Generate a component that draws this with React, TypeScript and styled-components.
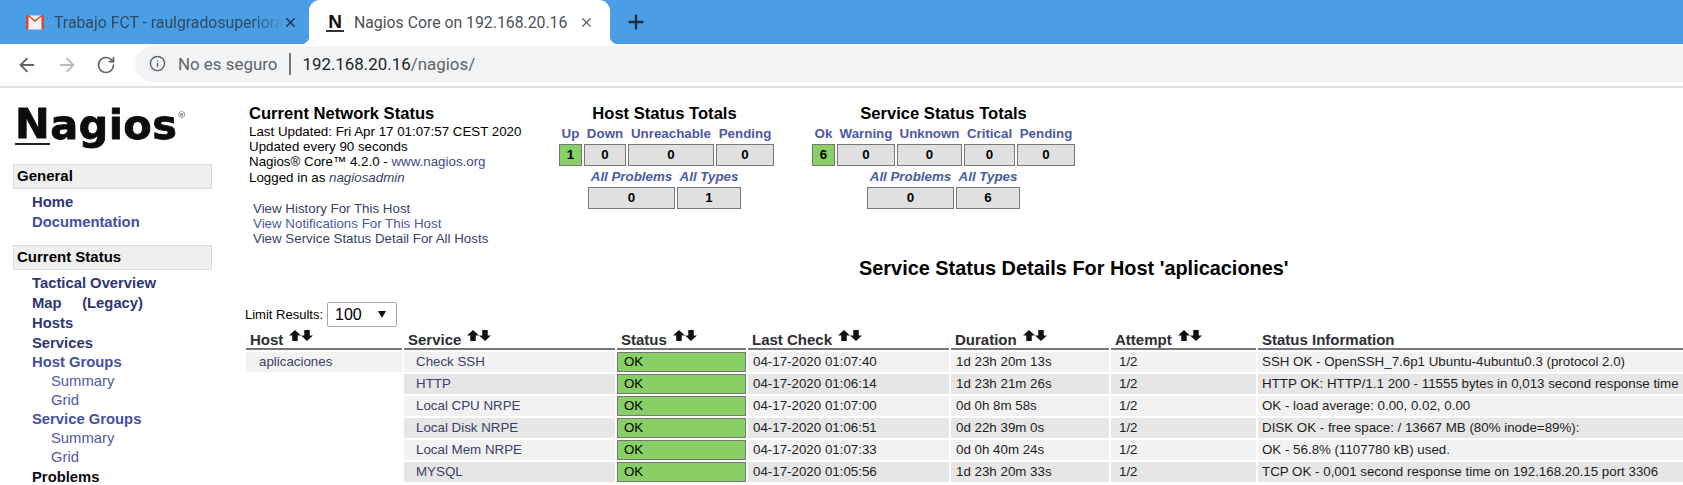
import styled, { createGlobalStyle } from "styled-components";
import { ArrowLeft, ArrowRight, Info, Plus, RotateCw, X } from "lucide-react";

const GlobalStyle = createGlobalStyle`
  html, body {
    margin: 0;
    padding: 0;
    height: 485px;
    overflow: hidden;
    background: #fff;
  }
  body {
    font-family: "Liberation Sans", Arial, sans-serif;
    color: #000;
  }
`;

const TabBar = styled.div`
  height: 44px;
  background: #4a9ee6;
  display: flex;
  align-items: flex-end;
  padding-left: 9px;
`;

const InactiveTab = styled.div`
  width: 300px;
  height: 44px;
  box-sizing: border-box;
  display: flex;
  align-items: center;
  padding: 0 11px 0 17px;
  color: #2f4a63;
  font: 15.8px Roboto, sans-serif;
  svg.close {
    color: #24384d;
    flex: none;
  }
`;

const TabTitle = styled.span<{ $fade?: boolean }>`
  flex: 1;
  margin-left: 10px;
  white-space: nowrap;
  overflow: hidden;
  ${(p) =>
    p.$fade
      ? "mask-image: linear-gradient(to right, #000 88%, transparent 100%);"
      : ""}
`;

const ActiveTab = styled.div`
  position: relative;
  width: 301px;
  height: 44px;
  box-sizing: border-box;
  background: #fff;
  border-radius: 11px 11px 0 0;
  display: flex;
  align-items: center;
  padding: 0 16px 0 17px;
  color: #4d5156;
  font: 15.8px Roboto, sans-serif;
  &::before,
  &::after {
    content: "";
    position: absolute;
    bottom: 0;
    width: 8px;
    height: 8px;
  }
  &::before {
    left: -8px;
    background: radial-gradient(circle at 0 0, transparent 8px, #fff 8.5px);
  }
  &::after {
    right: -8px;
    background: radial-gradient(circle at 100% 0, transparent 8px, #fff 8.5px);
  }
  svg.close {
    color: #5f6368;
    flex: none;
  }
`;

const NagiosFavicon = styled.span`
  width: 18px;
  flex: none;
  font: bold 19px/16px "Liberation Sans", sans-serif;
  color: #111;
  text-align: center;
  border-bottom: 2px solid #333;
  margin-top: 1px;
`;

const NewTab = styled.div`
  height: 44px;
  display: flex;
  align-items: center;
  margin-left: 15px;
  color: #1f2d3d;
`;

const AddressRow = styled.div`
  height: 44px;
  display: flex;
  align-items: center;
  box-sizing: border-box;
  padding-left: 16px;
  border-bottom: 2px solid #dfe1e5;
  gap: 16px;
  color: #5f6368;
`;

const NavIcon = styled.span<{ $dim?: boolean }>`
  width: 24px;
  display: flex;
  color: ${(p) => (p.$dim ? "#b5b8bc" : "#5f6368")};
`;

const UrlPill = styled.div`
  flex: 1;
  height: 36px;
  margin-left: -1px;
  margin-top: -3px;
  background: #f1f3f4;
  border-radius: 18px 0 0 18px;
  display: flex;
  align-items: center;
  padding-left: 14px;
  font: 16.9px Roboto, sans-serif;
  white-space: nowrap;
`;

const SecurityLabel = styled.span`
  margin-left: 12px;
  color: #5f6368;
`;

const UrlDivider = styled.span`
  width: 2px;
  height: 22px;
  background: #777;
  margin: 0 11px 0 12px;
`;

const UrlHost = styled.span`
  color: #1f2328;
`;

const UrlPath = styled.span`
  color: #5f6368;
`;

const Page = styled.div`
  display: flex;
  align-items: flex-start;
`;

const Sidebar = styled.nav`
  width: 199px;
  flex: none;
  margin-left: 13px;
  padding-top: 14px;
`;

const Logo = styled.div`
  display: flex;
  align-items: flex-start;
  height: 62px;
  margin-left: 2px;
  font: bold 41.5px/46px "DejaVu Sans", sans-serif;
  letter-spacing: 0.4px;
  color: #0c0c0c;
  -webkit-text-stroke: 0.8px #0c0c0c;
  filter: blur(0.35px);
`;

const LogoInitial = styled.span`
  height: 41px;
  line-height: 44px;
  border-bottom: 2px solid #222;
`;

const LogoMark = styled.sup`
  font-size: 9px;
  line-height: 26px;
  letter-spacing: 0;
  color: #777;
  -webkit-text-stroke: 0;
`;

const SectionHeader = styled.div`
  height: 25px;
  box-sizing: border-box;
  background: #efefef;
  border: 1px solid #dcdcdc;
  padding-left: 3px;
  font-size: 15px;
  font-weight: bold;
  line-height: 22px;
`;

const NavList = styled.div<{ $bottom?: number; $top?: number }>`
  display: flex;
  flex-direction: column;
  padding: ${(p) => p.$top ?? 3}px 0 ${(p) => p.$bottom ?? 0}px 19px;
`;

const NavItem = styled.a<{ $tone?: string; $sub?: boolean; $h?: number }>`
  height: ${(p) => p.$h ?? 20}px;
  line-height: ${(p) => p.$h ?? 20}px;
  font-size: 14.8px;
  font-weight: ${(p) => (p.$sub ? "normal" : "bold")};
  padding-left: ${(p) => (p.$sub ? 19 : 0)}px;
  color: ${(p) => p.$tone ?? "#2f3573"};
  white-space: pre;
`;

const Main = styled.main`
  flex: 1;
  min-width: 0;
  margin-left: 33px;
  padding-top: 15px;
`;

const TopRow = styled.div`
  display: flex;
  align-items: flex-start;
  height: 153px;
`;

const InfoBlock = styled.div`
  width: 308px;
  margin-left: 4px;
  font-size: 13.33px;
  line-height: 15.2px;
`;

const InfoTitle = styled.div`
  font-size: 16.6px;
  font-weight: bold;
  line-height: 21px;
`;

const QuickLinks = styled.div`
  margin: 16px 0 0 4px;
`;

const LinkText = styled.a<{ $tone?: string }>`
  display: block;
  color: ${(p) => p.$tone ?? "#3a4066"};
`;

const InlineLink = styled.span`
  color: #3f4a86;
`;

const AdminName = styled.i`
  color: #3a4066;
`;

const Totals = styled.div<{ $w: number; $gap: number }>`
  width: ${(p) => p.$w}px;
  margin-right: ${(p) => p.$gap}px;
  display: flex;
  flex-direction: column;
  align-items: center;
`;

const TotalsTitle = styled.div`
  font-size: 16.6px;
  font-weight: bold;
  line-height: 21px;
`;

const TotalsGrid = styled.div<{ $cols: string; $shift?: number }>`
  display: grid;
  grid-template-columns: ${(p) => p.$cols};
  column-gap: 2px;
  justify-content: center;
  margin-left: ${(p) => p.$shift ?? 0}px;
`;

const TotalsHead = styled.div<{ $italic?: boolean }>`
  height: 20px;
  line-height: 20px;
  font-size: 13.33px;
  font-weight: bold;
  font-style: ${(p) => (p.$italic ? "italic" : "normal")};
  color: #4c58a4;
  text-align: center;
  white-space: nowrap;
`;

const TotalsCell = styled.div<{ $ok?: boolean }>`
  height: 22px;
  box-sizing: border-box;
  background: ${(p) => (p.$ok ? "#88d066" : "#e0e0e0")};
  border: 1px solid #777;
  font-size: 13.33px;
  font-weight: bold;
  line-height: 20px;
  text-align: center;
`;

const GridSpacer = styled.div`
  height: 1px;
`;

const PageTitle = styled.h1`
  margin: 0 0 0 614px;
  font-size: 19.9px;
  font-weight: bold;
  line-height: 24px;
  white-space: nowrap;
`;

const LimitRow = styled.div`
  display: flex;
  align-items: center;
  margin: 22px 0 0;
  font-size: 13px;
  height: 25px;
`;

const LimitBox = styled.div`
  width: 70px;
  height: 25px;
  box-sizing: border-box;
  margin-left: 4px;
  border: 1px solid #a6a6a6;
  border-radius: 2px;
  display: flex;
  align-items: center;
  justify-content: space-between;
  padding: 0 10px 0 7px;
  font-size: 16px;
`;

const Caret = styled.span`
  width: 0;
  height: 0;
  border-left: 4px solid transparent;
  border-right: 4px solid transparent;
  border-top: 7px solid #111;
`;

const StatusTable = styled.div`
  display: grid;
  grid-template-columns: 156px 211px 129px 201px 158px 145px 1fr;
  column-gap: 2px;
  width: 1438px;
  margin-left: 1px;
`;

const HeadCell = styled.div`
  height: 23px;
  box-sizing: border-box;
  border-bottom: 2px solid #777;
  padding: 0 0 1px 4px;
  display: flex;
  align-items: flex-end;
  font-size: 15px;
  font-weight: bold;
  line-height: 14px;
  color: #2d2d33;
  white-space: nowrap;
`;

const SortIcons = styled.span`
  display: inline-flex;
  margin: 0 0 6px 6px;
  gap: 0;
`;

const BodyCell = styled.div<{ $zebra: boolean; $pad?: number; $tone?: string }>`
  height: 20px;
  margin-top: 2px;
  box-sizing: border-box;
  background: ${(p) => (p.$zebra ? "#e6e6e6" : "#f3f2f3")};
  padding-left: ${(p) => p.$pad ?? 5}px;
  font-size: 13.33px;
  line-height: 20px;
  color: ${(p) => p.$tone ?? "#1d1d22"};
  white-space: nowrap;
  overflow: hidden;
`;

const EmptyCell = styled.div`
  height: 20px;
  margin-top: 2px;
`;

const StatusCell = styled.div`
  height: 20px;
  margin-top: 2px;
  box-sizing: border-box;
  background: #88d066;
  border: 1px solid #777;
  padding-left: 6px;
  font-size: 13.33px;
  line-height: 18px;
`;

function SortArrow({ down }: { down?: boolean }) {
  return (
    <svg width="12" height="11" viewBox="0 0 11 10" fill="#111">
      <path
        d="M5.5 0 L11 5 H8 V10 H3 V5 H0 Z"
        transform={down ? "rotate(180 5.5 5)" : undefined}
      />
    </svg>
  );
}

function Sort() {
  return (
    <SortIcons>
      <SortArrow />
      <SortArrow down />
    </SortIcons>
  );
}

function GmailIcon() {
  return (
    <svg width="18" height="15" viewBox="0 0 18 15">
      <rect x="0.5" y="0.5" width="17" height="14" rx="1" fill="#f2f2f2" />
      <path d="M2.5 1.5 L9 7 L15.5 1.5 V14.5 H18 V1 Q18 0 17 0 H15.5 L9 5 L2.5 0 H1 Q0 0 0 1 V14.5 H2.5 Z" fill="#db4437" />
    </svg>
  );
}

const services = [
  ["Check SSH", "04-17-2020 01:07:40", "1d 23h 20m 13s", "SSH OK - OpenSSH_7.6p1 Ubuntu-4ubuntu0.3 (protocol 2.0)"],
  ["HTTP", "04-17-2020 01:06:14", "1d 23h 21m 26s", "HTTP OK: HTTP/1.1 200 - 11555 bytes in 0,013 second response time"],
  ["Local CPU NRPE", "04-17-2020 01:07:00", "0d 0h 8m 58s", "OK - load average: 0.00, 0.02, 0.00"],
  ["Local Disk NRPE", "04-17-2020 01:06:51", "0d 22h 39m 0s", "DISK OK - free space: / 13667 MB (80% inode=89%):"],
  ["Local Mem NRPE", "04-17-2020 01:07:33", "0d 0h 40m 24s", "OK - 56.8% (1107780 kB) used."],
  ["MYSQL", "04-17-2020 01:05:56", "1d 23h 20m 33s", "TCP OK - 0,001 second response time on 192.168.20.15 port 3306"],
];

const headers = [
  { label: "Host", sort: true },
  { label: "Service", sort: true },
  { label: "Status", sort: true },
  { label: "Last Check", sort: true },
  { label: "Duration", sort: true },
  { label: "Attempt", sort: true },
  { label: "Status Information", sort: false },
];

export default function App() {
  return (
    <>
      <GlobalStyle />
      <TabBar>
        <InactiveTab>
          <GmailIcon />
          <TabTitle $fade>Trabajo FCT - raulgradosuperiora</TabTitle>
          <X className="close" size={15} strokeWidth={2.6} />
        </InactiveTab>
        <ActiveTab>
          <NagiosFavicon>N</NagiosFavicon>
          <TabTitle>Nagios Core on 192.168.20.16</TabTitle>
          <X className="close" size={15} strokeWidth={2} />
        </ActiveTab>
        <NewTab>
          <Plus size={22} strokeWidth={2.6} />
        </NewTab>
      </TabBar>
      <AddressRow>
        <NavIcon>
          <ArrowLeft size={22} />
        </NavIcon>
        <NavIcon $dim>
          <ArrowRight size={22} />
        </NavIcon>
        <NavIcon>
          <RotateCw size={20} />
        </NavIcon>
        <UrlPill>
          <Info size={17} />
          <SecurityLabel>No es seguro</SecurityLabel>
          <UrlDivider />
          <UrlHost>192.168.20.16</UrlHost>
          <UrlPath>/nagios/</UrlPath>
        </UrlPill>
      </AddressRow>
      <Page>
        <Sidebar>
          <Logo>
            <LogoInitial>N</LogoInitial>agios<LogoMark>®</LogoMark>
          </Logo>
          <SectionHeader>General</SectionHeader>
          <NavList $bottom={13}>
            <NavItem>Home</NavItem>
            <NavItem $tone="#4450a0">Documentation</NavItem>
          </NavList>
          <SectionHeader>Current Status</SectionHeader>
          <NavList>
            <NavItem>Tactical Overview</NavItem>
            <NavItem>{"Map     (Legacy)"}</NavItem>
            <NavItem>Hosts</NavItem>
            <NavItem>Services</NavItem>
            <NavItem $tone="#4450a0" $h={19}>Host Groups</NavItem>
            <NavItem $tone="#5058a8" $sub $h={19}>Summary</NavItem>
            <NavItem $tone="#5058a8" $sub $h={19}>Grid</NavItem>
            <NavItem $tone="#4450a0" $h={19}>Service Groups</NavItem>
            <NavItem $tone="#5058a8" $sub $h={19}>Summary</NavItem>
            <NavItem $tone="#5058a8" $sub $h={19}>Grid</NavItem>
            <NavItem $tone="#0a0a14">Problems</NavItem>
          </NavList>
        </Sidebar>
        <Main>
          <TopRow>
            <InfoBlock>
              <InfoTitle>Current Network Status</InfoTitle>
              Last Updated: Fri Apr 17 01:07:57 CEST 2020
              <br />
              Updated every 90 seconds
              <br />
              Nagios® Core™ 4.2.0 - <InlineLink>www.nagios.org</InlineLink>
              <br />
              Logged in as <AdminName>nagiosadmin</AdminName>
              <QuickLinks>
                <LinkText>View History For This Host</LinkText>
                <LinkText $tone="#4c58a4">View Notifications For This Host</LinkText>
                <LinkText>View Service Status Detail For All Hosts</LinkText>
              </QuickLinks>
            </InfoBlock>
            <Totals $w={215} $gap={40}>
              <TotalsTitle>Host Status Totals</TotalsTitle>
              <TotalsGrid $cols="23px 42px 86px 58px" $shift={4}>
                <TotalsHead>Up</TotalsHead>
                <TotalsHead>Down</TotalsHead>
                <TotalsHead>Unreachable</TotalsHead>
                <TotalsHead>Pending</TotalsHead>
                <TotalsCell $ok>1</TotalsCell>
                <TotalsCell>0</TotalsCell>
                <TotalsCell>0</TotalsCell>
                <TotalsCell>0</TotalsCell>
              </TotalsGrid>
              <GridSpacer />
              <TotalsGrid $cols="87px 64px">
                <TotalsHead $italic>All Problems</TotalsHead>
                <TotalsHead $italic>All Types</TotalsHead>
                <TotalsCell>0</TotalsCell>
                <TotalsCell>1</TotalsCell>
              </TotalsGrid>
            </Totals>
            <Totals $w={263} $gap={0}>
              <TotalsTitle>Service Status Totals</TotalsTitle>
              <TotalsGrid $cols="23px 58px 65px 51px 58px">
                <TotalsHead>Ok</TotalsHead>
                <TotalsHead>Warning</TotalsHead>
                <TotalsHead>Unknown</TotalsHead>
                <TotalsHead>Critical</TotalsHead>
                <TotalsHead>Pending</TotalsHead>
                <TotalsCell $ok>6</TotalsCell>
                <TotalsCell>0</TotalsCell>
                <TotalsCell>0</TotalsCell>
                <TotalsCell>0</TotalsCell>
                <TotalsCell>0</TotalsCell>
              </TotalsGrid>
              <GridSpacer />
              <TotalsGrid $cols="87px 64px">
                <TotalsHead $italic>All Problems</TotalsHead>
                <TotalsHead $italic>All Types</TotalsHead>
                <TotalsCell>0</TotalsCell>
                <TotalsCell>6</TotalsCell>
              </TotalsGrid>
            </Totals>
          </TopRow>
          <PageTitle>Service Status Details For Host 'aplicaciones'</PageTitle>
          <LimitRow>
            Limit Results:
            <LimitBox>
              100
              <Caret />
            </LimitBox>
          </LimitRow>
          <StatusTable>
            {headers.map((h) => (
              <HeadCell key={h.label}>
                {h.label}
                {h.sort && <Sort />}
              </HeadCell>
            ))}
            {services.map((s, i) => (
              <>
                {i === 0 ? (
                  <BodyCell $zebra={false} $pad={13} $tone="#3a4066">aplicaciones</BodyCell>
                ) : (
                  <EmptyCell />
                )}
                <BodyCell $zebra={i % 2 === 1} $pad={12} $tone="#3a4066">{s[0]}</BodyCell>
                <StatusCell>OK</StatusCell>
                <BodyCell $zebra={i % 2 === 1}>{s[1]}</BodyCell>
                <BodyCell $zebra={i % 2 === 1}>{s[2]}</BodyCell>
                <BodyCell $zebra={i % 2 === 1} $pad={8}>1/2</BodyCell>
                <BodyCell $zebra={i % 2 === 1} $pad={4}>{s[3]}</BodyCell>
              </>
            ))}
          </StatusTable>
        </Main>
      </Page>
    </>
  );
}
